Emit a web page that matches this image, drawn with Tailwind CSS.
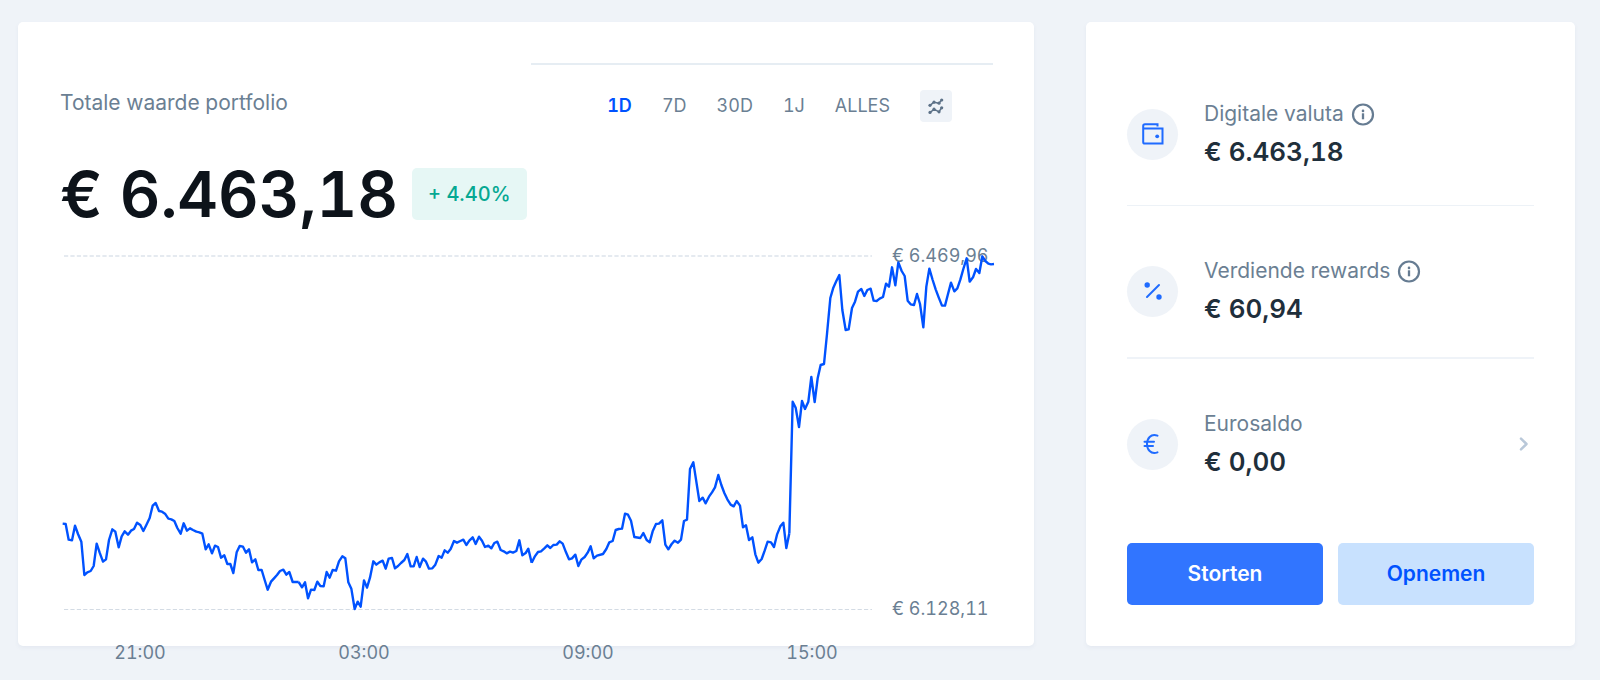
<!DOCTYPE html>
<html lang="nl">
<head>
<meta charset="utf-8">
<meta name="viewport" content="width=device-width, initial-scale=1">
<title>Portfolio</title>
<script src="https://cdn.jsdelivr.net/npm/@tailwindcss/browser@4"></script>
</head>
<body class="min-h-screen bg-[#eff3f8] font-['Inter',sans-serif] text-[#6b7f93] tabular-nums [font-optical-sizing:none]">
<main class="grid grid-cols-[1016fr_489fr] gap-[52px] pt-[22px] pr-[25px] pb-[34px] pl-[18px]">

  <section class="flex flex-col rounded-[5px] bg-white pt-[41px] pr-[41px] pl-[42px] shadow-[0_2px_4px_rgba(60,90,130,0.06)]">
    <header class="flex justify-between">
      <h1 class="pt-[26px] text-[21px] leading-7">Totale waarde portfolio</h1>
      <nav aria-label="Periode" class="flex w-[462px] items-center justify-end gap-[30px] border-t-2 border-[#e6edf3] pt-[25px] pr-[41px] text-lg leading-8">
        <button type="button" class="font-semibold text-[#0052ff]">1D</button>
        <button type="button">7D</button>
        <button type="button">30D</button>
        <button type="button">1J</button>
        <button type="button">ALLES</button>
        <button type="button" aria-label="Grafiektype" class="flex size-8 items-center justify-center rounded bg-[#eff3f8]">
          <svg class="size-4" viewBox="0 0 16 16" fill="none" stroke="#5d7288" stroke-width="1.5" stroke-linejoin="round" aria-hidden="true">
            <path d="M2 7.3 6 4.2l5 1L13.600 2M2 14.600l4-3.400 5 2.600 2.600-4.200"/>
            <g fill="#5d7288" stroke="none"><circle cx="2" cy="7.3" r="1.6"/><circle cx="6" cy="4.2" r="1.6"/><circle cx="11" cy="5.2" r="1.6"/><circle cx="13.7" cy="2" r="1.6"/><circle cx="2" cy="14.4" r="1.6"/><circle cx="6" cy="11.2" r="1.6"/><circle cx="11" cy="13.8" r="1.6"/><circle cx="13.7" cy="9.8" r="1.6"/></g>
          </svg>
        </button>
      </nav>
    </header>

    <div class="mt-8 flex items-center gap-[14px]">
      <p class="text-[63px] leading-[80px] font-semibold text-[#0d131a]">€ 6.463,18</p>
      <span class="mb-px rounded-[5px] bg-[#e6f7f5] px-4 py-3 text-xl leading-7 font-medium text-[#05a892]">+ 4.40%</span>
    </div>

    <div class="relative mt-[10px] flex h-[377px] flex-col justify-between text-lg leading-6">
      <div class="flex items-center gap-5 pl-1">
        <svg class="h-0.5 flex-1" aria-hidden="true"><line x1="0" y1="1" x2="100%" y2="1" stroke="#e5eaf0" stroke-width="2" stroke-dasharray="4.2 2.2"/></svg>
        <span class="w-[101px]">€ 6.469,96</span>
      </div>
      <div class="flex items-center gap-5 pl-1">
        <svg class="h-px flex-1" aria-hidden="true"><line x1="0" y1="0.5" x2="100%" y2="0.5" stroke="#d3dbe4" stroke-width="1" stroke-dasharray="4.2 2.2"/></svg>
        <span class="w-[101px]">€ 6.128,11</span>
      </div>
      <svg class="absolute inset-0 size-full overflow-visible" viewBox="180 732 2799 1131" preserveAspectRatio="none" fill="none" stroke="#0052ff" stroke-width="2.4" stroke-linejoin="round" role="img" aria-label="Koersverloop">
        <polyline vector-effect="non-scaling-stroke" transform="translate(150 1470)" points="38,101 47,102 56,149 66,151 75,107 84,132 94,155 103,255 112,247 122,243 131,228 140,161 149,188 159,215 168,208 177,150 187,118 196,125 206,172 215,139 224,124 234,134 243,122 252,117 261,98 271,105 280,123 289,105 299,84 308,47 317,39 327,63 336,65 345,71 355,86 364,88 373,93 382,114 392,131 401,100 411,122 420,115 429,120 439,125 448,127 457,131 467,178 476,163 486,190 495,167 504,171 513,203 523,196 532,222 541,222 550,249 560,187 569,168 579,170 588,188 597,178 606,217 616,208 625,240 635,240 644,270 653,299 663,275 672,265 681,255 690,243 700,239 709,254 718,246 728,276 746,276"/>
        <polyline vector-effect="non-scaling-stroke" transform="translate(870 1470)" points="26,276 36,292 45,277 54,325 63,299 73,300 82,275 91,288 101,289 110,246 119,263 128,240 138,242 147,214 157,199 166,205 175,277 184,296 194,357 203,335 212,350 222,271 231,293 240,263 250,214 259,224 268,217 278,212 287,236 296,206 306,204 315,235 324,228 333,219 343,210 352,192 362,229 371,229 380,201 389,231 399,206 408,215 417,236 427,235 436,224 446,198 455,203 464,181 473,188 482,177 492,153 501,158 511,153 520,149 529,165 538,152 548,142 557,162 567,140 576,152 585,171 595,167 604,175 613,159 622,155 632,180 641,184 650,190 660,185 669,188 679,183 688,151 697,196 707,189 715,176 725,218"/>
        <polyline vector-effect="non-scaling-stroke" transform="translate(1590 1350)" points="5,338 14,320 24,306 33,304 43,295 52,286 61,294 70,285 80,284 89,274 98,281 108,307 117,328 126,325 136,314 145,348 154,329 164,321 173,308 182,289 191,325 201,317 219,312 229,297 238,277 248,273 257,240 266,237 276,236 285,191 294,194 303,212 313,261 331,264 340,249 350,270 359,277 368,244 378,222 387,221 397,211 406,284 415,298 425,282 434,272 444,278 453,269 462,213 471,209 480,57 490,37 499,95 508,153 518,143 527,160 537,140 546,127 555,112 565,75 574,105 583,129 592,148 602,164 611,169 620,153 630,167 639,232 648,226 657,270 667,262 676,313 685,338 695,327 704,302 713,275 723,277 732,291 741,254 751,229 760,218 769,294 778,250"/>
        <polyline vector-effect="non-scaling-stroke" transform="translate(2310 720)" points="58,880 68,485 77,503 87,561 96,483 105,507 115,485 124,411 134,486 143,415 152,375 162,372 171,282 181,174 190,143 199,123 208,105 217,210 227,270 236,268 246,204 255,185 264,155 274,147 283,168 292,150 302,146 311,182 320,183 329,176 339,171 348,131 357,140 366,82 376,136 385,67 395,93 404,108 413,182 422,193 432,195 441,162 450,192 460,262 469,140 478,86 488,120 497,148 506,172 516,197 525,197 534,162 543,128 553,154 562,145 571,119 580,87 590,55 599,125 609,112 618,87 628,99 637,49 646,63 655,71 663,73 672,72"/>
      </svg>
    </div>
    <div class="mt-5 mr-[69px] -mb-5 -ml-8 grid grid-cols-4 text-center text-lg leading-6">
      <span>21:00</span><span>03:00</span><span>09:00</span><span>15:00</span>
    </div>
  </section>

  <section class="rounded-[5px] bg-white px-[41px] pt-[42px] pb-[41px] shadow-[0_2px_4px_rgba(60,90,130,0.06)]">
    <div class="flex items-center gap-[26px] border-b border-[#edf2f7] pt-9 pb-[37px]">
      <span class="flex size-[51px] items-center justify-center rounded-full bg-[#eff3f8]">
        <svg class="size-6" viewBox="0 0 24 24" fill="none" stroke="#1f6bff" stroke-width="2" aria-hidden="true"><path d="M16.500 4.500V2.300H4a1.800 1.800 0 0 0-1.800 1.800V20A1.600 1.600 0 0 0 3.800 21.600H21.500V6.600H3"/><circle cx="16.200" cy="14.300" r="1.900" fill="#1f6bff" stroke="none"/></svg>
      </span>
      <div class="flex flex-col gap-2">
        <div class="flex items-center gap-[7px] text-[21px] leading-7">Digitale valuta
          <button type="button" aria-label="Info over digitale valuta"><svg class="size-6" viewBox="0 0 24 24" fill="none" stroke="#667c92" stroke-width="2.200" aria-hidden="true"><circle cx="12" cy="12.500" r="10"/><path d="M12 11.300v6" stroke-width="2.300"/><circle cx="12" cy="8.900" r="1.300" fill="#667c92" stroke="none"/></svg></button>
        </div>
        <div class="text-[26px] leading-8 font-semibold text-[#1f2f3b]">€ 6.463,18</div>
      </div>
    </div>

    <div class="flex items-center gap-[26px] border-b-2 border-[#eff3f8] pt-[51px] pb-8">
      <span class="flex size-[51px] items-center justify-center rounded-full bg-[#eff3f8]">
        <svg class="size-6" viewBox="0 0 24 24" fill="#1f6bff" aria-hidden="true"><path d="M18 6 6 18" stroke="#1f6bff" stroke-width="2" stroke-linecap="round"/><circle cx="6.200" cy="6" r="2.700"/><circle cx="18" cy="18" r="2.700"/></svg>
      </span>
      <div class="flex flex-col gap-2">
        <div class="flex items-center gap-[7px] text-[21px] leading-7">Verdiende rewards
          <button type="button" aria-label="Info over verdiende rewards"><svg class="size-6" viewBox="0 0 24 24" fill="none" stroke="#667c92" stroke-width="2.200" aria-hidden="true"><circle cx="12" cy="12.500" r="10"/><path d="M12 11.300v6" stroke-width="2.300"/><circle cx="12" cy="8.900" r="1.300" fill="#667c92" stroke="none"/></svg></button>
        </div>
        <div class="text-[26px] leading-8 font-semibold text-[#1f2f3b]">€ 60,94</div>
      </div>
    </div>

    <a href="#eurosaldo" class="flex items-center gap-[26px] pt-[51px] pb-[65px]">
      <span class="flex size-[51px] items-center justify-center rounded-full bg-[#eff3f8]">
        <svg class="size-6" viewBox="0 0 24 24" fill="none" stroke="#1f6bff" stroke-width="2" stroke-linecap="round" aria-hidden="true"><path d="M16.500 3.600C9.500 1 6 7 6 12s3.500 11 10.500 8.400M3.500 9.700h9.500M3.500 14h8.500"/></svg>
      </span>
      <span class="flex flex-1 flex-col gap-2">
        <span class="text-[21px] leading-7">Eurosaldo</span>
        <span class="text-[26px] leading-8 font-semibold text-[#1f2f3b]">€ 0,00</span>
      </span>
      <svg class="mr-1 h-4 w-3" viewBox="0 0 12 16" fill="none" stroke="#b9c8d9" stroke-width="2.500" stroke-linecap="round" stroke-linejoin="round" aria-hidden="true"><path d="m3 2.700 5.500 5.300L3 13.300"/></svg>
    </a>

    <div class="grid grid-cols-2 gap-[15px] text-[21px] leading-[62px] font-semibold">
      <button type="button" class="rounded-[5px] bg-[#3175ff] text-white">Storten</button>
      <button type="button" class="rounded-[5px] bg-[#c8e1fe] text-[#0052ff]">Opnemen</button>
    </div>
  </section>
</main>
</body>
</html>
